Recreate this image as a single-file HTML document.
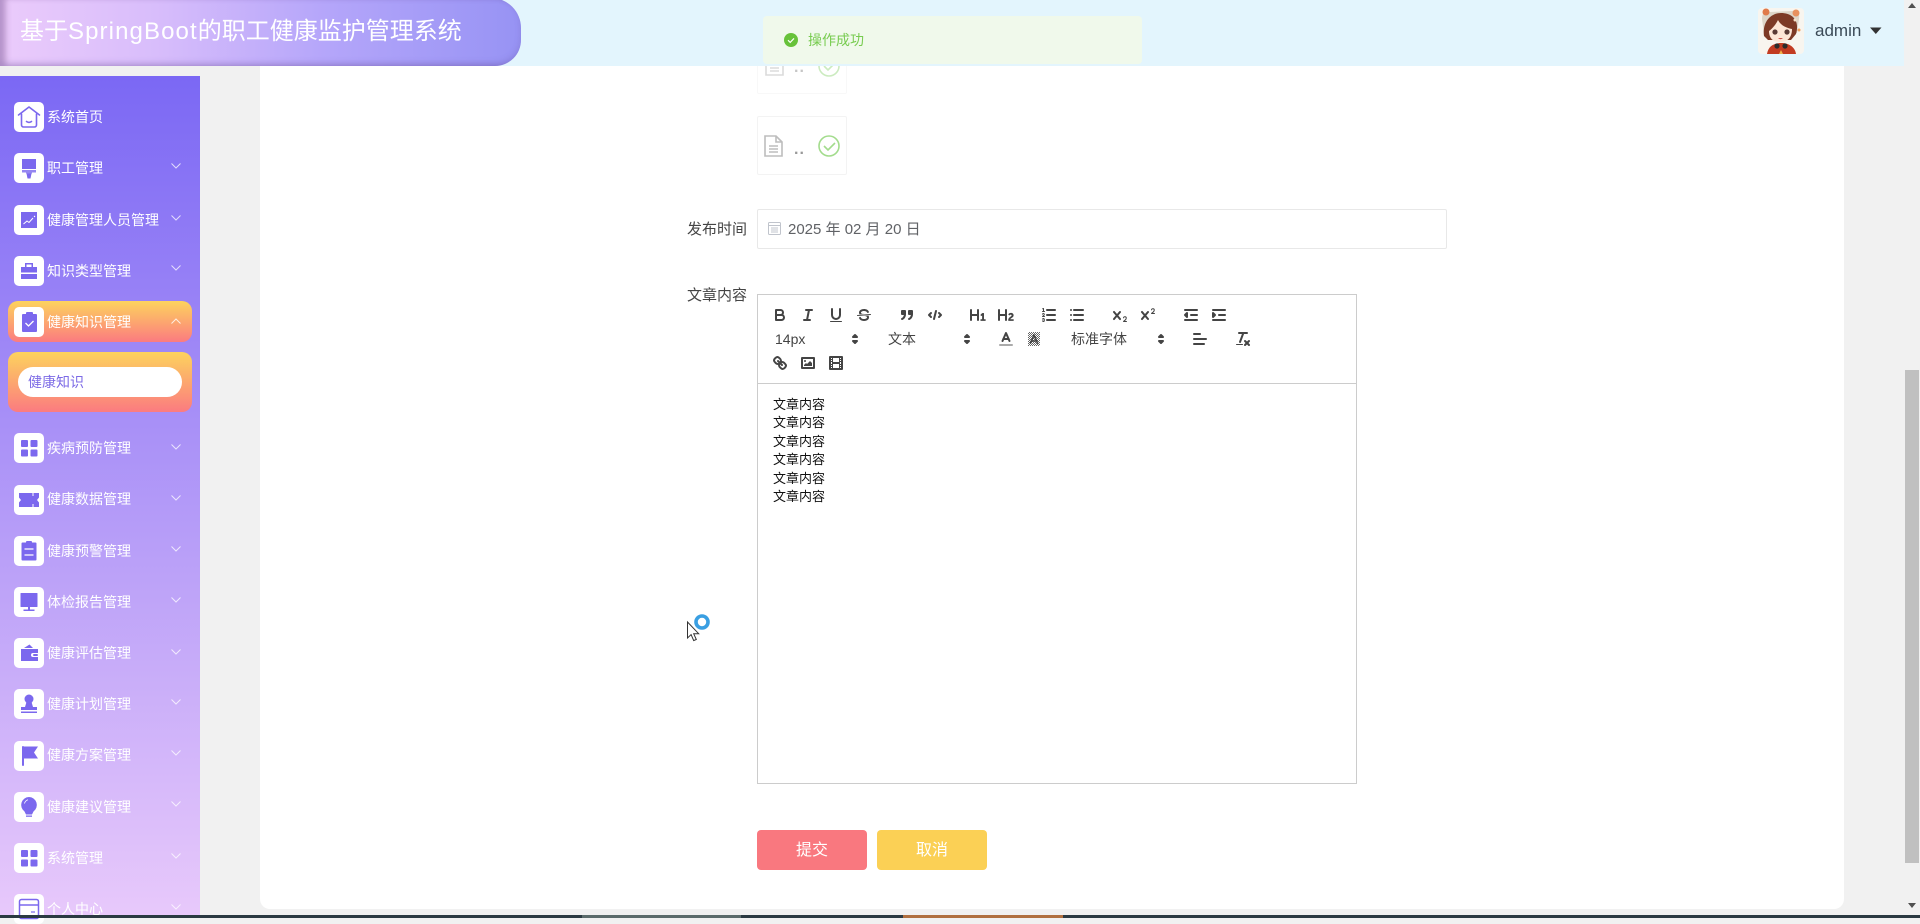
<!DOCTYPE html>
<html lang="zh-CN">
<head>
<meta charset="utf-8">
<title>基于SpringBoot的职工健康监护管理系统</title>
<style>
html,body{margin:0;padding:0;width:1920px;height:918px;overflow:hidden;background:#f1f1f1;font-family:"Liberation Sans","Noto Sans CJK SC",sans-serif}
div,span,svg{position:absolute;box-sizing:border-box}
b{font-weight:normal;letter-spacing:1.1px}
.head{left:0;top:0;width:1904px;height:66px;background:#e3f5fd}
.pill{left:0;top:-2px;width:521px;height:68px;border-radius:0 30px 26px 0;background:linear-gradient(90deg,#ebcbfb 0%,#d8bdfb 30%,#b5a6fa 62%,#9793f4 100%);box-shadow:inset 0 -3px 7px rgba(90,70,150,.2),inset 6px 0 6px rgba(90,50,110,.3)}
.title{left:20px;top:14px;line-height:36px;font-size:24px;color:#fff;white-space:nowrap}
.side{left:0;top:76px;width:200px;height:842px;background:linear-gradient(180deg,#7b68f4 0%,#e8c9fb 100%)}
.ib{left:14px;width:30px;height:30px;background:#fff;border-radius:5px}
.ib svg{left:0;top:0;width:30px;height:30px}
.tx{left:47px;height:30px;line-height:30px;font-size:14px;color:#fff;white-space:nowrap}
.ch{left:171px;width:10px;height:6px}
.card{left:260px;top:20px;width:1584px;height:889px;background:#fff;border-radius:10px}
.up{left:757px;width:90px;height:60px;border:1px solid #f3f3f3;border-radius:2px}
.lab{left:687px;font-size:15px;line-height:20px;color:#444;white-space:nowrap}
.q{width:18px;height:18px;fill:none;stroke:#444;stroke-width:2;stroke-linecap:round;stroke-linejoin:round}
.q .f{fill:#444;stroke:none}
.q .t{stroke-width:1}
.sel{font-size:14px;line-height:18px;color:#444;white-space:nowrap;top:330px}
.ln{left:773px;font-size:13px;line-height:18px;color:#111;white-space:nowrap}
.btn{top:830px;width:110px;height:40px;border-radius:4px;color:#fff;font-size:16px;line-height:41px;text-align:center}
</style>
</head>
<body>
<div class="card"></div>

<!-- upload cards -->
<div class="up" style="top:34px;opacity:.55">
<svg style="left:6px;top:18px" width="22" height="24" viewBox="0 0 22 24" fill="none" stroke="#bdbdbd" stroke-width="1.6"><path d="M2 2h11l6 6v14H2z"/><path d="M13 2v6h6M6 12h9M6 15h9M6 18h9"/></svg>
<span style="left:36px;top:23px;font-size:16px;line-height:20px;color:#999;letter-spacing:1px;font-weight:bold">..</span>
<svg style="left:60px;top:20px" width="22" height="22" viewBox="0 0 22 22" fill="none" stroke="#a3dc8d" stroke-width="1.6"><circle cx="11" cy="11" r="10"/><path d="M6 11l4 4 7-7"/></svg>
</div>
<div class="up" style="top:116px;height:59px">
<svg style="left:5px;top:17px" width="22" height="24" viewBox="0 0 22 24" fill="none" stroke="#bdbdbd" stroke-width="1.6"><path d="M2 2h11l6 6v14H2z"/><path d="M13 2v6h6M6 12h9M6 15h9M6 18h9"/></svg>
<span style="left:36px;top:23px;font-size:16px;line-height:20px;color:#999;letter-spacing:1px;font-weight:bold">..</span>
<svg style="left:60px;top:18px" width="22" height="22" viewBox="0 0 22 22" fill="none" stroke="#a3dc8d" stroke-width="1.6"><circle cx="11" cy="11" r="10"/><path d="M6 11l4 4 7-7"/></svg>
</div>

<!-- date -->
<div class="lab" style="top:220px">发布时间</div>
<div style="left:757px;top:209px;width:690px;height:40px;border:1px solid #e8e8e8;border-radius:2px"></div>
<svg style="left:768px;top:222px" width="13" height="13" viewBox="0 0 13 13" fill="none" stroke="#c0c4cc"><rect x=".5" y=".5" width="12" height="12" rx="1"/><path d="M.5 3.5h12M3 6h7M3 8h7M3 10h7"/></svg>
<div style="left:788px;top:220px;font-size:15px;line-height:20px;color:#606266;white-space:nowrap">2025 年 02 月 20 日</div>

<!-- editor -->
<div class="lab" style="top:286px">文章内容</div>
<div style="left:757px;top:294px;width:600px;height:490px;border:1px solid #ccc"></div>
<div style="left:757px;top:383px;width:600px;height:1px;background:#ccc"></div>

<!-- row 1 -->
<svg class="q" style="left:771px;top:306px" viewBox="0 0 18 18"><path d="M5,4H9.5A2.5,2.5,0,0,1,12,6.5v0A2.5,2.5,0,0,1,9.5,9H5A0,0,0,0,1,5,9V4A0,0,0,0,1,5,4Z"/><path d="M5,9h5.5A2.5,2.5,0,0,1,13,11.5v0A2.5,2.5,0,0,1,10.5,14H5a0,0,0,0,1,0,0V9A0,0,0,0,1,5,9Z"/></svg>
<svg class="q" style="left:799px;top:306px" viewBox="0 0 18 18"><line x1="7" x2="13" y1="4" y2="4"/><line x1="5" x2="11" y1="14" y2="14"/><line x1="8" x2="10" y1="14" y2="4"/></svg>
<svg class="q" style="left:827px;top:306px" viewBox="0 0 18 18"><path d="M5,3V9a4.012,4.012,0,0,0,4,4H9a4.012,4.012,0,0,0,4-4V3"/><rect class="f" height="1" rx="0.5" ry="0.5" width="12" x="3" y="15"/></svg>
<svg class="q" style="left:855px;top:306px" viewBox="0 0 18 18"><line class="t" x1="15.5" x2="2.5" y1="8.5" y2="9.5"/><path class="f" d="M9.007,8C6.542,7.791,6,7.519,6,6.5,6,5.792,7.283,5,9,5c1.571,0,2.765.679,2.969,1.309a1,1,0,0,0,1.9-.617C13.356,4.106,11.354,3,9,3,6.2,3,4,4.538,4,6.5a3.2,3.2,0,0,0,.5,1.843Z"/><path class="f" d="M8.984,10C11.457,10.208,12,10.479,12,11.5c0,.708-1.283,1.5-3,1.5-1.571,0-2.765-.679-2.969-1.309a1,1,0,1,0-1.9.617C4.644,13.894,6.646,15,9,15c2.8,0,5-1.538,5-3.5a3.2,3.2,0,0,0-.5-1.843Z"/></svg>
<svg class="q" style="left:898px;top:306px" viewBox="0 0 18 18"><rect style="fill:#444" height="3" width="3" x="4" y="5"/><rect style="fill:#444" height="3" width="3" x="11" y="5"/><path d="M7,8c0,4.031-3,5-3,5" style="fill:#444"/><path d="M14,8c0,4.031-3,5-3,5" style="fill:#444"/></svg>
<svg class="q" style="left:926px;top:306px" viewBox="0 0 18 18"><polyline points="5 7 3 9 5 11"/><polyline points="13 7 15 9 13 11"/><line x1="10" x2="8" y1="5" y2="13"/></svg>
<svg class="q" style="left:969px;top:306px" viewBox="0 0 18 18"><path class="f" d="M10,4V14a1,1,0,0,1-2,0V10H3v4a1,1,0,0,1-2,0V4A1,1,0,0,1,3,4V8H8V4a1,1,0,0,1,2,0Zm6.06787,9.209H14.98975V7.59863a.54085.54085,0,0,0-.605-.60547h-.62744a1.01119,1.01119,0,0,0-.748.29688L11.645,8.56641a.5435.5435,0,0,0-.022.8584l.28613.30762a.53861.53861,0,0,0,.84717.0332l.09912-.08789a1.2137,1.2137,0,0,0,.2417-.35254h.02246s-.01123.30859-.01123.60547V13.209H12.041a.54085.54085,0,0,0-.605.60547v.43945a.54085.54085,0,0,0,.605.60547h4.02686a.54085.54085,0,0,0,.605-.60547v-.43945A.54085.54085,0,0,0,16.06787,13.209Z"/></svg>
<svg class="q" style="left:997px;top:306px" viewBox="0 0 18 18"><path class="f" d="M16.73975,13.81445v.43945a.54085.54085,0,0,1-.605.60547H11.855a.58392.58392,0,0,1-.64893-.60547V14.0127c0-2.90527,3.39941-3.42187,3.39941-4.55469a.77675.77675,0,0,0-.84717-.78125,1.17684,1.17684,0,0,0-.83594.38477c-.2749.26367-.561.374-.85791.13184l-.4292-.34082c-.30811-.24219-.38525-.51758-.1543-.81445a2.97155,2.97155,0,0,1,2.45361-1.17676,2.45393,2.45393,0,0,1,2.68408,2.40918c0,2.45312-3.1792,2.92676-3.27832,3.93848h2.79443A.54085.54085,0,0,1,16.73975,13.81445ZM9,3A.99974.99974,0,0,0,8,4V8H3V4A1,1,0,0,0,1,4V14a1,1,0,0,0,2,0V10H8v4a1,1,0,0,0,2,0V4A.99974.99974,0,0,0,9,3Z"/></svg>
<svg class="q" style="left:1040px;top:306px" viewBox="0 0 18 18"><line x1="7" x2="15" y1="4" y2="4"/><line x1="7" x2="15" y1="9" y2="9"/><line x1="7" x2="15" y1="14" y2="14"/><line class="t" x1="2.5" x2="4.5" y1="5.5" y2="5.5"/><path class="f" d="M3.5,6A0.5,0.5,0,0,1,3,5.5V3.085l-0.276.138A0.5,0.5,0,0,1,2.053,3c-0.124-.247-0.023-0.324.224-0.447l1-.5A0.5,0.5,0,0,1,4,2.5v3A0.5,0.5,0,0,1,3.5,6Z"/><path class="t" d="M4.5,10.5h-2c0-.234,1.85-1.076,1.85-2.234A0.959,0.959,0,0,0,2.5,8.156"/><path class="t" d="M2.5,14.846a0.959,0.959,0,0,0,1.85-.109A0.7,0.7,0,0,0,3.75,14a0.688,0.688,0,0,0,.6-0.736,0.959,0.959,0,0,0-1.85-.109"/></svg>
<svg class="q" style="left:1068px;top:306px" viewBox="0 0 18 18"><line x1="6" x2="15" y1="4" y2="4"/><line x1="6" x2="15" y1="9" y2="9"/><line x1="6" x2="15" y1="14" y2="14"/><line x1="3" x2="3" y1="4" y2="4"/><line x1="3" x2="3" y1="9" y2="9"/><line x1="3" x2="3" y1="14" y2="14"/></svg>
<svg class="q" style="left:1111px;top:306px" viewBox="0 0 18 18"><path class="f" d="M15.5,15H13.861a3.858,3.858,0,0,0,1.914-2.975,1.8,1.8,0,0,0-1.6-1.751A1.921,1.921,0,0,0,12.021,11.7a0.50013,0.50013,0,1,0,.957.291h0a0.914,0.914,0,0,1,1.053-.725,0.81,0.81,0,0,1,.744.762c0,1.076-1.16971,1.86982-1.93971,2.43082A1.45639,1.45639,0,0,0,12,15.5a0.5,0.5,0,0,0,.5.5h3A0.5,0.5,0,0,0,15.5,15Z"/><path class="f" d="M9.65,5.241a1,1,0,0,0-1.409.108L6,7.964,3.759,5.349A1,1,0,0,0,2.192,6.59178Q2.21541,6.6213,2.241,6.649L4.684,9.5,2.241,12.35A1,1,0,0,0,3.71,13.70722q0.02557-.02768.049-0.05722L6,11.036,8.241,13.65a1,1,0,1,0,1.567-1.24277Q9.78459,12.3777,9.759,12.35L7.316,9.5,9.759,6.651A1,1,0,0,0,9.65,5.241Z"/></svg>
<svg class="q" style="left:1139px;top:306px" viewBox="0 0 18 18"><path class="f" d="M15.5,7H13.861a4.015,4.015,0,0,0,1.914-2.975,1.8,1.8,0,0,0-1.6-1.751A1.922,1.922,0,0,0,12.021,3.7a0.5,0.5,0,1,0,.957.291,0.917,0.917,0,0,1,1.053-.725,0.81,0.81,0,0,1,.744.762c0,1.077-1.164,1.925-1.934,2.486A1.423,1.423,0,0,0,12,7.5a0.5,0.5,0,0,0,.5.5h3A0.5,0.5,0,0,0,15.5,7Z"/><path class="f" d="M9.651,5.241a1,1,0,0,0-1.41.108L6,7.964,3.759,5.349a1,1,0,1,0-1.519,1.3L4.683,9.5,2.241,12.35a1,1,0,1,0,1.519,1.3L6,11.036,8.241,13.65a1,1,0,0,0,1.519-1.3L7.317,9.5,9.759,6.651A1,1,0,0,0,9.651,5.241Z"/></svg>
<svg class="q" style="left:1182px;top:306px" viewBox="0 0 18 18"><line x1="3" x2="15" y1="14" y2="14"/><line x1="3" x2="15" y1="4" y2="4"/><line x1="9" x2="15" y1="9" y2="9"/><polyline points="5 7 5 11 3 9 5 7" style="fill:#444"/></svg>
<svg class="q" style="left:1210px;top:306px" viewBox="0 0 18 18"><line x1="3" x2="15" y1="14" y2="14"/><line x1="3" x2="15" y1="4" y2="4"/><line x1="9" x2="15" y1="9" y2="9"/><polyline points="3 7 3 11 5 9 3 7" style="fill:#444"/></svg>

<!-- row 2 -->
<div class="sel" style="left:775px">14px</div>
<svg class="q" style="left:846px;top:330px" viewBox="0 0 18 18"><polygon points="7 11 9 13 11 11 7 11" style="fill:#444"/><polygon points="7 7 9 5 11 7 7 7" style="fill:#444"/></svg>
<div class="sel" style="left:888px">文本</div>
<svg class="q" style="left:958px;top:330px" viewBox="0 0 18 18"><polygon points="7 11 9 13 11 11 7 11" style="fill:#444"/><polygon points="7 7 9 5 11 7 7 7" style="fill:#444"/></svg>
<svg class="q" style="left:997px;top:330px" viewBox="0 0 18 18"><line x1="3" x2="15" y1="15" y2="15" style="stroke:#aaa"/><polyline points="5.5 11 9 3 12.5 11"/><line x1="11.63" x2="6.38" y1="9" y2="9"/></svg>
<svg class="q" style="left:1025px;top:330px" viewBox="0 0 18 18"><defs><pattern id="hatch" width="2" height="2" patternUnits="userSpaceOnUse"><rect width="1" height="1" fill="#666" stroke="none"/><rect x="1" y="1" width="1" height="1" fill="#666" stroke="none"/></pattern></defs><rect x="3" y="2" width="12" height="14" style="fill:url(#hatch);stroke:none"/><polyline points="5.5 13 9 5 12.5 13" style="stroke-width:1.6"/><line x1="11.63" x2="6.38" y1="11" y2="11" style="stroke-width:1.6"/></svg>
<div class="sel" style="left:1071px">标准字体</div>
<svg class="q" style="left:1152px;top:330px" viewBox="0 0 18 18"><polygon points="7 11 9 13 11 11 7 11" style="fill:#444"/><polygon points="7 7 9 5 11 7 7 7" style="fill:#444"/></svg>
<svg class="q" style="left:1191px;top:330px" viewBox="0 0 18 18"><line x1="3" x2="15" y1="9" y2="9"/><line x1="3" x2="13" y1="14" y2="14"/><line x1="3" x2="9" y1="4" y2="4"/></svg>
<svg class="q" style="left:1234px;top:330px" viewBox="0 0 18 18"><line x1="5" x2="13" y1="3" y2="3"/><line x1="6" x2="9.35" y1="12" y2="3"/><line x1="11" x2="15" y1="11" y2="15"/><line x1="15" x2="11" y1="11" y2="15"/><rect class="f" height="1" rx="0.5" ry="0.5" width="7" x="2" y="14"/></svg>

<!-- row 3 -->
<svg class="q" style="left:771px;top:354px" viewBox="0 0 18 18"><line x1="7" x2="11" y1="7" y2="11"/><path d="M8.9,4.577a3.476,3.476,0,0,1,.36,4.679A3.476,3.476,0,0,1,4.577,8.9C3.185,7.5,2.035,6.4,4.217,4.217S7.5,3.185,8.9,4.577Z"/><path d="M13.423,9.1a3.476,3.476,0,0,0-4.679-.36,3.476,3.476,0,0,0,.36,4.679c1.392,1.392,2.5,2.542,4.679.36S14.815,10.5,13.423,9.1Z"/></svg>
<svg class="q" style="left:799px;top:354px" viewBox="0 0 18 18"><rect height="10" width="12" x="3" y="4"/><circle class="f" cx="6" cy="7" r="1"/><polyline class="f" points="5 12 5 11 7 9 8 10 11 7 13 9 13 12 5 12"/></svg>
<svg class="q" style="left:827px;top:354px" viewBox="0 0 18 18"><rect height="12" width="12" x="3" y="3"/><rect class="f" height="12" width="1" x="5" y="3"/><rect class="f" height="12" width="1" x="12" y="3"/><rect class="f" height="2" width="8" x="5" y="8"/><rect class="f" height="1" width="3" x="3" y="5"/><rect class="f" height="1" width="3" x="3" y="7"/><rect class="f" height="1" width="3" x="3" y="10"/><rect class="f" height="1" width="3" x="3" y="12"/><rect class="f" height="1" width="3" x="12" y="5"/><rect class="f" height="1" width="3" x="12" y="7"/><rect class="f" height="1" width="3" x="12" y="10"/><rect class="f" height="1" width="3" x="12" y="12"/></svg>

<div class="ln" style="top:396px">文章内容</div>
<div class="ln" style="top:414px">文章内容</div>
<div class="ln" style="top:433px">文章内容</div>
<div class="ln" style="top:451px">文章内容</div>
<div class="ln" style="top:470px">文章内容</div>
<div class="ln" style="top:488px">文章内容</div>

<div class="btn" style="left:757px;background:#f9787f">提交</div>
<div class="btn" style="left:877px;background:#fbd055">取消</div>

<!-- busy cursor -->
<svg style="left:686px;top:612px" width="26" height="30" viewBox="0 0 26 30"><path d="M1.5 10v16l3.6-3.4 2.6 6 2.6-1.1-2.6-5.8h5z" fill="#fff" stroke="#333" stroke-width="1"/><circle cx="16" cy="10" r="6" fill="none" stroke="#3a9fe2" stroke-width="3.6"/></svg>

<!-- header -->
<div class="head"></div>
<div class="pill"></div>
<div class="title">基于<b>SpringBoot</b>的职工健康监护管理系统</div>
<svg style="left:1757px;top:6px" width="48" height="49" viewBox="0 0 48 49">
<rect x="1" y="2" width="46" height="46" rx="4" fill="#f8f5ef"/>
<path d="M5 13c0-7 4-9 8-7l22-1c5-2 8 2 7 8l-2 14H7z" fill="#ddd5c8"/>
<circle cx="9" cy="6" r="3.500" fill="#e07a4a"/><circle cx="39" cy="7" r="3.500" fill="#e8915f"/>
<path d="M7 30C5 17 13 7 24 7s19 7 15 21l-5 6H11z" fill="#7d3a26"/>
<path d="M12 25c4-3 7-7 9-11 3 6 9 8 14 9 0 8-4 13-12 13s-11-5-11-11z" fill="#fde6d6"/>
<circle cx="18" cy="26" r="2.600" fill="#5a3a35"/><circle cx="30" cy="26" r="2.600" fill="#5a3a35"/>
<path d="M21 32q2.500 2.400 5 0z" fill="#c8504a"/>
<path d="M10 48c1-7 6-11 14-11s14 4 15 11z" fill="#c23b22"/>
<circle cx="20" cy="40" r="2.600" fill="#2c2b2b"/><circle cx="28" cy="40" r="2.600" fill="#2c2b2b"/>
<path d="M22 48l2-4 2 4z" fill="#f0b24a"/>
<circle cx="38" cy="14" r="1.500" fill="#f6e0c8"/><circle cx="42" cy="24" r="1.500" fill="#f0a060"/>
</svg>
<div style="left:1815px;top:20px;font-size:17px;line-height:22px;color:#3b4a57;white-space:nowrap">admin</div>
<svg style="left:1870px;top:27px" width="12" height="8" viewBox="0 0 12 8"><path d="M0 0.500h11.500L5.800 7z" fill="#333"/></svg>

<!-- message -->
<div style="left:763px;top:16px;width:379px;height:48px;background:#f0f9eb;border-radius:4px"></div>
<svg style="left:784px;top:33px" width="14" height="14" viewBox="0 0 14 14"><circle cx="7" cy="7" r="7" fill="#67c23a"/><path d="M4 7.200l2.200 2.200 3.800-4" fill="none" stroke="#fff" stroke-width="1.200"/></svg>
<div style="left:808px;top:30px;font-size:14px;line-height:20px;color:#78cc50;white-space:nowrap">操作成功</div>

<!-- sidebar -->
<div class="side"></div>
<div style="left:8px;top:301px;width:184px;height:41px;border-radius:10px;background:linear-gradient(180deg,#fdd35d,#fb7b80)"></div>
<div style="left:8px;top:352px;width:184px;height:60px;border-radius:10px;background:linear-gradient(180deg,#fdd35d,#fb7b80)"></div>
<div style="left:18px;top:367px;width:164px;height:30px;border-radius:15px;background:#fff"></div>
<div style="left:28px;top:367px;font-size:14px;line-height:30px;color:#7c6ae6;white-space:nowrap">健康知识</div>

<div class="ib" style="top:102px"><svg viewBox="0 0 30 30" fill="none" stroke="#7b68ee" stroke-width="1.600" stroke-linejoin="round" stroke-linecap="round"><path d="M4.500 13L15 5l10.500 8"/><path d="M7.500 12v11a2 2 0 0 0 2 2h11a2 2 0 0 0 2-2V12"/><path d="M12.500 19.500q2.500 1.800 5 0"/></svg></div>
<div class="tx" style="top:102px">系统首页</div>

<div class="ib" style="top:153px"><svg viewBox="0 0 30 30" fill="#7b68ee"><path d="M8 6h14v10H8z"/><path d="M8 17h14v2.500h-4v1h-6v-1H8z" opacity=".8"/><path d="M12.500 20.500h5l-1 5h-3z"/></svg></div>
<div class="tx" style="top:153px">职工管理</div>
<svg class="ch" style="top:163px" viewBox="0 0 10 6" fill="none" stroke="#fff" opacity=".75"><path d="M.5.500L5 5l4.500-4.500"/></svg>

<div class="ib" style="top:205px"><svg viewBox="0 0 30 30"><rect x="7" y="7" width="16" height="16" fill="#7b68ee"/><path d="M9.500 19l3.500-3 2 1.500 4-4.500" fill="none" stroke="#fff" stroke-width="1"/><circle cx="20.500" cy="11.500" r=".7" fill="#fff"/></svg></div>
<div class="tx" style="top:205px">健康管理人员管理</div>
<svg class="ch" style="top:215px" viewBox="0 0 10 6" fill="none" stroke="#fff" opacity=".75"><path d="M.5.500L5 5l4.500-4.500"/></svg>

<div class="ib" style="top:256px"><svg viewBox="0 0 30 30" fill="#7b68ee"><path d="M11 7h8v4h-1.500V8.500h-5V11H11z"/><path d="M7 11h16v5.500H7zM7 18h16v5H7z"/></svg></div>
<div class="tx" style="top:256px">知识类型管理</div>
<svg class="ch" style="top:265px" viewBox="0 0 10 6" fill="none" stroke="#fff" opacity=".75"><path d="M.5.500L5 5l4.500-4.500"/></svg>

<div class="ib" style="top:307px"><svg viewBox="0 0 30 30"><rect x="8" y="7" width="15" height="18" rx="1" fill="#7b68ee"/><rect x="12" y="5" width="7" height="3" rx="1" fill="#7b68ee"/><path d="M11.500 16l3 3 5-5" fill="none" stroke="#fff" stroke-width="1.300"/></svg></div>
<div class="tx" style="top:307px">健康知识管理</div>
<svg class="ch" style="top:318px" viewBox="0 0 10 6" fill="none" stroke="#fff" opacity=".8"><path d="M.5 5.500L5 1l4.500 4.500"/></svg>

<div class="ib" style="top:433px"><svg viewBox="0 0 30 30" fill="#7b68ee"><rect x="7" y="7" width="7" height="7" rx="1"/><rect x="16.500" y="7" width="7" height="7" rx="1"/><rect x="7" y="16.500" width="7" height="7" rx="1"/><rect x="16.500" y="16.500" width="7" height="7" rx="1"/></svg></div>
<div class="tx" style="top:433px">疾病预防管理</div>
<svg class="ch" style="top:444px" viewBox="0 0 10 6" fill="none" stroke="#fff" opacity=".75"><path d="M.5.500L5 5l4.500-4.500"/></svg>

<div class="ib" style="top:485px"><svg viewBox="0 0 30 30" fill="#7b68ee"><path d="M5 8h13.500v3h1V8H25v4.500l-2 2.500 2 2.500V22h-5.500v-3h-1v3H5v-4.500L7 15l-2-2.500z"/><rect x="18.500" y="13" width="1" height="3"/></svg></div>
<div class="tx" style="top:484px">健康数据管理</div>
<svg class="ch" style="top:495px" viewBox="0 0 10 6" fill="none" stroke="#fff" opacity=".75"><path d="M.5.500L5 5l4.500-4.500"/></svg>

<div class="ib" style="top:536px"><svg viewBox="0 0 30 30"><rect x="7.500" y="6.500" width="15" height="18" rx="1" fill="#7b68ee"/><rect x="12" y="5" width="6" height="3" rx="1" fill="#7b68ee"/><path d="M10.500 13h9M10.500 19h9" stroke="#fff" stroke-width="1.200"/></svg></div>
<div class="tx" style="top:536px">健康预警管理</div>
<svg class="ch" style="top:546px" viewBox="0 0 10 6" fill="none" stroke="#fff" opacity=".75"><path d="M.5.500L5 5l4.500-4.500"/></svg>

<div class="ib" style="top:587px"><svg viewBox="0 0 30 30" fill="#7b68ee"><rect x="6.500" y="6" width="17" height="14" rx=".5"/><rect x="14" y="20" width="2" height="3"/><rect x="9.500" y="22.500" width="11" height="1.500"/></svg></div>
<div class="tx" style="top:587px">体检报告管理</div>
<svg class="ch" style="top:597px" viewBox="0 0 10 6" fill="none" stroke="#fff" opacity=".75"><path d="M.5.500L5 5l4.500-4.500"/></svg>

<div class="ib" style="top:638px"><svg viewBox="0 0 30 30" fill="#7b68ee"><path d="M10 10l5.500-3.500L19 10z"/><path d="M7 11h17v4h-5a2 2 0 0 0 0 4h5v4H7z"/><rect x="19" y="16" width="5" height="2" rx="1"/></svg></div>
<div class="tx" style="top:638px">健康评估管理</div>
<svg class="ch" style="top:649px" viewBox="0 0 10 6" fill="none" stroke="#fff" opacity=".75"><path d="M.5.500L5 5l4.500-4.500"/></svg>

<div class="ib" style="top:689px"><svg viewBox="0 0 30 30" fill="#7b68ee"><circle cx="15" cy="10" r="4.500"/><path d="M12.500 13h5l1.500 5h4v3H7v-3h4z"/><rect x="7" y="22.500" width="16" height="1.500"/></svg></div>
<div class="tx" style="top:689px">健康计划管理</div>
<svg class="ch" style="top:699px" viewBox="0 0 10 6" fill="none" stroke="#fff" opacity=".75"><path d="M.5.500L5 5l4.500-4.500"/></svg>

<div class="ib" style="top:741px"><svg viewBox="0 0 30 30" fill="#7b68ee"><rect x="8" y="5" width="2" height="20" rx="1"/><path d="M10 5.500h14l-4 6 4 6H10z"/></svg></div>
<div class="tx" style="top:740px">健康方案管理</div>
<svg class="ch" style="top:750px" viewBox="0 0 10 6" fill="none" stroke="#fff" opacity=".75"><path d="M.5.500L5 5l4.500-4.500"/></svg>

<div class="ib" style="top:792px"><svg viewBox="0 0 30 30"><path d="M15 5a8 8 0 0 1 4.500 14.500l-1.500 3h-6l-1.500-3A8 8 0 0 1 15 5z" fill="#7b68ee"/><rect x="12" y="23.500" width="6" height="1.300" fill="#7b68ee"/><path d="M10.500 11.500q.7-3 3.500-3.800" fill="none" stroke="#fff" stroke-width=".8"/></svg></div>
<div class="tx" style="top:792px">健康建议管理</div>
<svg class="ch" style="top:801px" viewBox="0 0 10 6" fill="none" stroke="#fff" opacity=".75"><path d="M.5.500L5 5l4.500-4.500"/></svg>

<div class="ib" style="top:843px"><svg viewBox="0 0 30 30" fill="#7b68ee"><rect x="7" y="7" width="7" height="7" rx="1"/><rect x="16.500" y="7" width="7" height="7" rx="1"/><rect x="7" y="16.500" width="7" height="7" rx="1"/><rect x="16.500" y="16.500" width="7" height="7" rx="1"/></svg></div>
<div class="tx" style="top:843px">系统管理</div>
<svg class="ch" style="top:853px" viewBox="0 0 10 6" fill="none" stroke="#fff" opacity=".75"><path d="M.5.500L5 5l4.500-4.500"/></svg>

<div class="ib" style="top:894px"><svg viewBox="0 0 30 30" fill="none" stroke="#7b68ee" stroke-width="1.500"><rect x="5.500" y="5.500" width="19" height="19" rx="2"/><path d="M5.500 11h19"/><path d="M17 18h4" stroke-width="1.200"/></svg></div>
<div class="tx" style="top:894px">个人中心</div>
<svg class="ch" style="top:904px" viewBox="0 0 10 6" fill="none" stroke="#fff" opacity=".75"><path d="M.5.500L5 5l4.500-4.500"/></svg>

<!-- scrollbar -->
<div style="left:1904px;top:0;width:16px;height:918px;background:#f1f1f1"></div>
<div style="left:1905px;top:370px;width:14px;height:493px;background:#c0c0c0"></div>
<svg style="left:1908px;top:3px" width="8" height="5" viewBox="0 0 8 5"><path d="M4 0l4 5H0z" fill="#505050"/></svg>
<svg style="left:1908px;top:903px" width="8" height="5" viewBox="0 0 8 5"><path d="M0 0h8L4 5z" fill="#505050"/></svg>

<!-- bottom strip -->
<div style="left:0;top:915px;width:1920px;height:3px;background:#2b3a42"></div>
<div style="left:582px;top:915px;width:159px;height:3px;background:#5b6b6b"></div>
<div style="left:903px;top:915px;width:160px;height:3px;background:#b07040"></div>
</body>
</html>
